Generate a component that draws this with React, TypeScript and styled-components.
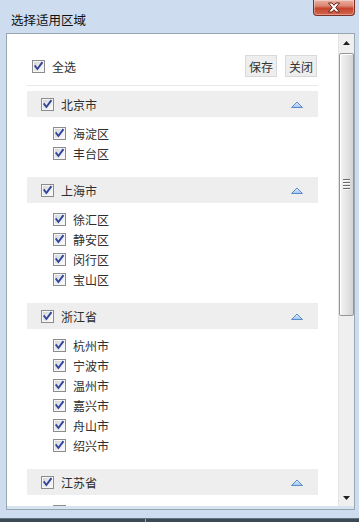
import React from 'react';
import styled, { createGlobalStyle } from 'styled-components';

const GlobalStyle = createGlobalStyle`
  html, body { margin: 0; padding: 0; }
  body {
    font-family: "Noto Sans CJK SC", "Liberation Sans", sans-serif;
    background: #cddcee;
  }
`;

const Window = styled.div`
  width: 359px;
  height: 522px;
  background: #cddcee;
  display: flex;
  flex-direction: column;
  overflow: hidden;
`;

const TitleBar = styled.div`
  height: 33px;
  flex: none;
  display: flex;
  justify-content: space-between;
  align-items: flex-start;
  padding: 0 4px 0 11px;
  box-sizing: border-box;
`;

const Title = styled.div`
  margin-top: 12px;
  font-size: 12.5px;
  line-height: 16px;
  color: #111;
`;

const CloseButton = styled.div`
  width: 42px;
  height: 16px;
  box-sizing: border-box;
  border: 1px solid #7e2f25;
  border-top: none;
  border-radius: 0 0 4px 4px;
  background: linear-gradient(#eab1a3 0%, #dc8571 40%, #c4452f 55%, #d1654c 100%);
  box-shadow: inset 0 0 0 1px rgba(255, 255, 255, 0.35);
  display: flex;
  align-items: center;
  justify-content: center;
`;

const Panel = styled.div`
  margin: 0 4px 0 6px;
  height: 477px;
  flex: none;
  box-sizing: border-box;
  border: 1px solid #9aa5b2;
  background: #d6e3f1;
  padding-bottom: 3px;
  display: flex;
`;

const ScrollArea = styled.div`
  flex: 1;
  display: flex;
  background: #fff;
  min-width: 0;
  overflow: hidden;
`;

const Content = styled.div`
  flex: 1;
  overflow: hidden;
  padding: 21px 20px 0 20px;
  font-size: 12px;
  color: #2e2e2e;
`;

const TopRow = styled.div`
  height: 22px;
  display: flex;
  align-items: center;
  justify-content: space-between;
  padding: 0 1px 0 5px;
`;

const CheckLabel = styled.label`
  display: flex;
  align-items: center;
  gap: 7px;
  line-height: 16px;
`;

const LabelText = styled.span`
  padding-top: 1px;
`;

const ButtonGroup = styled.div`
  display: flex;
  gap: 8px;
`;

const SmallButton = styled.button`
  height: 22px;
  padding: 1px 3px 0;
  border: 1px solid #d9d9d9;
  background: #eeeeee;
  font-family: inherit;
  font-size: 12px;
  color: #333;
  line-height: 18px;
  margin: 0;
`;

const Divider = styled.div`
  height: 1px;
  background: #e8e8e8;
  margin: 8px 0 5px;
`;

const GroupHeader = styled.div`
  height: 26px;
  background: #eeeeee;
  display: flex;
  align-items: center;
  padding: 0 15px 0 14px;
  gap: 7px;
`;

const GroupName = styled.span`
  flex: 1;
  line-height: 16px;
  padding-top: 1px;
`;

const ItemList = styled.div`
  padding: 6px 0 0 26px;
  margin-bottom: 14px;
`;

const Item = styled.div`
  height: 20px;
  display: flex;
  align-items: center;
  gap: 7px;
  line-height: 16px;
`;

const ScrollBar = styled.div`
  width: 16px;
  flex: none;
  background: #efefef;
  border-left: 1px solid #e4e4e4;
  box-sizing: border-box;
  display: flex;
  flex-direction: column;
`;

const ArrowButton = styled.div`
  height: 17px;
  flex: none;
  display: flex;
  align-items: center;
  justify-content: center;
`;

const Track = styled.div`
  flex: 1;
  padding-top: 2px;
`;

const Thumb = styled.div<{ $height: number }>`
  height: ${(p) => p.$height}px;
  box-sizing: border-box;
  border: 1px solid #979797;
  border-radius: 2px;
  background: linear-gradient(to right, #f4f4f4 0%, #e6e6e6 50%, #d3d3d3 100%);
  box-shadow: inset 1px 1px 0 #fff;
  display: flex;
  align-items: center;
  justify-content: center;
`;

const Grip = styled.div`
  width: 7px;
  display: flex;
  flex-direction: column;
  gap: 1px;
  & > i {
    display: block;
    height: 1px;
    background: #6b6b6b;
    border-bottom: 1px solid #f8f8f8;
  }
`;

const Footer = styled.div`
  margin-top: auto;
  height: 3px;
  flex: none;
  background: #3b4a55;
  border-top: 1px solid #62727e;
  display: flex;
`;

const FooterCell = styled.div<{ $w?: number }>`
  width: ${(p) => (p.$w ? `${p.$w}px` : 'auto')};
  flex: ${(p) => (p.$w ? 'none' : '1')};
  border-right: ${(p) => (p.$w ? '1px solid #9aa6b0' : 'none')};
`;

const CheckBox: React.FC = () => (
  <svg width="13" height="13" viewBox="0 0 13 13" style={{ flex: 'none' }}>
    <defs>
      <linearGradient id="cbInner" x1="0" y1="0" x2="1" y2="1">
        <stop offset="0" stopColor="#d6d6d6" />
        <stop offset="1" stopColor="#fbfbfb" />
      </linearGradient>
    </defs>
    <rect x="0.5" y="0.5" width="12" height="12" fill="#f6f6f6" stroke="#8b8c8c" />
    <rect x="2" y="2" width="9" height="9" fill="url(#cbInner)" />
    <path d="M3.3 6.2 L5.4 9 L9.9 2.9" fill="none" stroke="#2f449c" strokeWidth="1.9" strokeLinecap="square" />
  </svg>
);

const UpTriangle: React.FC = () => (
  <svg width="12" height="7" viewBox="0 0 12 7" style={{ flex: 'none' }}>
    <defs>
      <linearGradient id="triFill" x1="0" y1="0" x2="0" y2="1">
        <stop offset="0" stopColor="#e6f0fc" />
        <stop offset="1" stopColor="#9fc2ee" />
      </linearGradient>
    </defs>
    <path d="M0.5 6.5 L6 1 L11.5 6.5 Z" fill="url(#triFill)" stroke="#5a8bcb" strokeWidth="1" />
  </svg>
);

const CloseX: React.FC = () => (
  <svg width="14" height="11" viewBox="0 0 14 11">
    <path
      d="M1.5 1 L5 1 L7 3.3 L9 1 L12.5 1 L8.8 5.5 L12.5 10 L9 10 L7 7.7 L5 10 L1.5 10 L5.2 5.5 Z"
      fill="#fff"
      stroke="#6b2118"
      strokeWidth="1"
      strokeLinejoin="round"
    />
  </svg>
);

const SmallArrow: React.FC<{ dir: 'up' | 'down' }> = ({ dir }) => (
  <svg width="7" height="4" viewBox="0 0 7 4">
    {dir === 'up' ? <path d="M0 4 L3.5 0 L7 4 Z" fill="#222" /> : <path d="M0 0 L7 0 L3.5 4 Z" fill="#222" />}
  </svg>
);

const groups: { name: string; items: string[] }[] = [
  { name: '北京市', items: ['海淀区', '丰台区'] },
  { name: '上海市', items: ['徐汇区', '静安区', '闵行区', '宝山区'] },
  { name: '浙江省', items: ['杭州市', '宁波市', '温州市', '嘉兴市', '舟山市', '绍兴市'] },
  { name: '江苏省', items: [''] },
];

export default function App() {
  return (
    <>
      <GlobalStyle />
      <Window>
        <TitleBar>
          <Title>选择适用区域</Title>
          <CloseButton>
            <CloseX />
          </CloseButton>
        </TitleBar>
        <Panel>
          <ScrollArea>
            <Content>
              <TopRow>
                <CheckLabel>
                  <CheckBox />
                  <LabelText>全选</LabelText>
                </CheckLabel>
                <ButtonGroup>
                  <SmallButton>保存</SmallButton>
                  <SmallButton>关闭</SmallButton>
                </ButtonGroup>
              </TopRow>
              <Divider />
              {groups.map((g) => (
                <div key={g.name}>
                  <GroupHeader>
                    <CheckBox />
                    <GroupName>{g.name}</GroupName>
                    <UpTriangle />
                  </GroupHeader>
                  <ItemList>
                    {g.items.map((it, i) => (
                      <Item key={`${g.name}-${i}`}>
                        <CheckBox />
                        {it && <LabelText>{it}</LabelText>}
                      </Item>
                    ))}
                  </ItemList>
                </div>
              ))}
            </Content>
            <ScrollBar>
              <ArrowButton>
                <SmallArrow dir="up" />
              </ArrowButton>
              <Track>
                <Thumb $height={263}>
                  <Grip>
                    <i />
                    <i />
                    <i />
                    <i />
                  </Grip>
                </Thumb>
              </Track>
              <ArrowButton>
                <SmallArrow dir="down" />
              </ArrowButton>
            </ScrollBar>
          </ScrollArea>
        </Panel>
        <Footer>
          <FooterCell $w={145} />
          <FooterCell />
        </Footer>
      </Window>
    </>
  );
}
